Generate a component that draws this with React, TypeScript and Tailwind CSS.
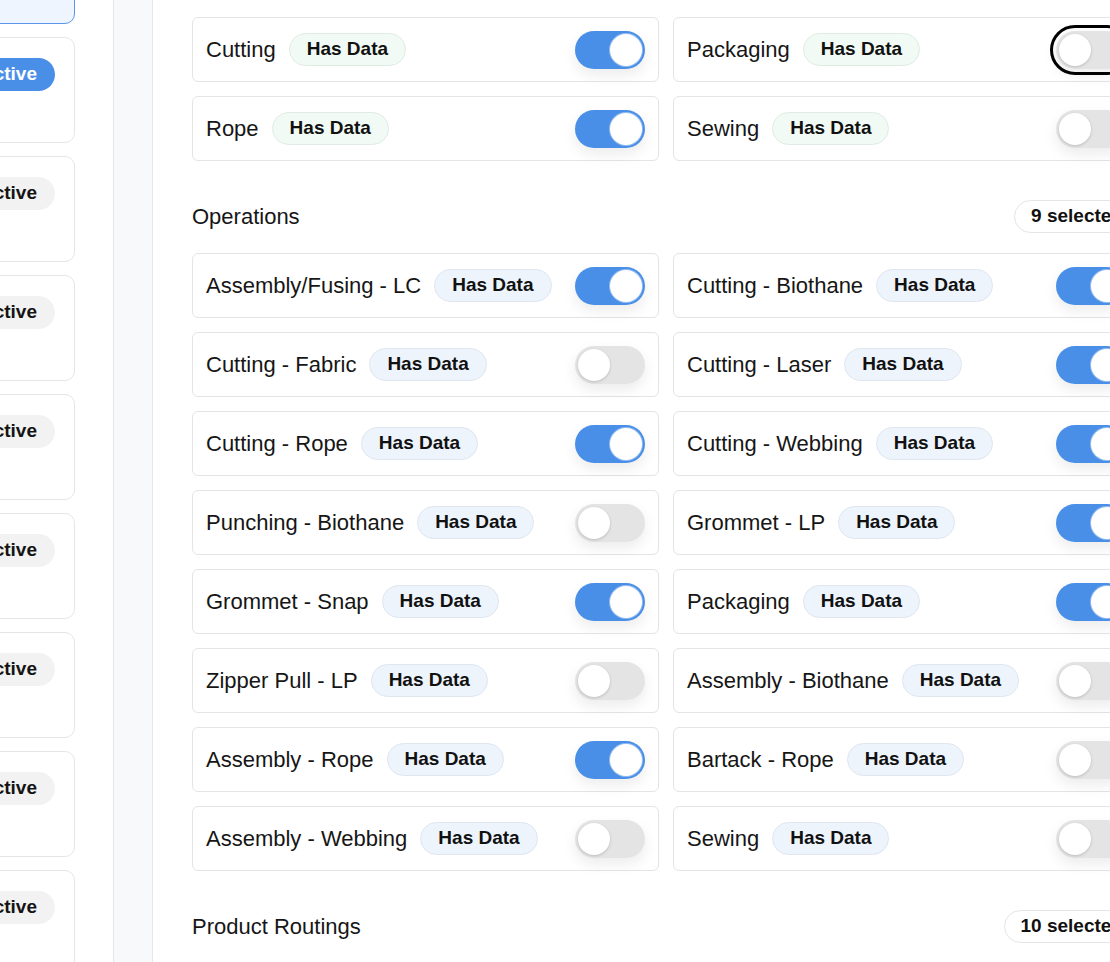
import React from 'react'

type Item = { name: string; on: boolean; focused?: boolean }

const departments: Item[] = [
  { name: 'Cutting', on: true },
  { name: 'Packaging', on: false, focused: true },
  { name: 'Rope', on: true },
  { name: 'Sewing', on: false },
]

const operations: Item[] = [
  { name: 'Assembly/Fusing - LC', on: true },
  { name: 'Cutting - Biothane', on: true },
  { name: 'Cutting - Fabric', on: false },
  { name: 'Cutting - Laser', on: true },
  { name: 'Cutting - Rope', on: true },
  { name: 'Cutting - Webbing', on: true },
  { name: 'Punching - Biothane', on: false },
  { name: 'Grommet - LP', on: true },
  { name: 'Grommet - Snap', on: true },
  { name: 'Packaging', on: true },
  { name: 'Zipper Pull - LP', on: false },
  { name: 'Assembly - Biothane', on: false },
  { name: 'Assembly - Rope', on: true },
  { name: 'Bartack - Rope', on: false },
  { name: 'Assembly - Webbing', on: false },
  { name: 'Sewing', on: false },
]

const sidebarCards = [
  { status: 'Active', selected: true },
  { status: 'Active', selected: false },
  { status: 'Inactive', selected: false },
  { status: 'Inactive', selected: false },
  { status: 'Inactive', selected: false },
  { status: 'Inactive', selected: false },
  { status: 'Inactive', selected: false },
  { status: 'Inactive', selected: false },
  { status: 'Inactive', selected: false },
]

const Toggle = ({ on, focused }: { on: boolean; focused?: boolean }) => (
  <button
    className={
      'relative flex items-center w-[70px] h-[38px] rounded-full shrink-0 px-[3px] shadow-[0_6px_14px_rgba(0,0,0,0.08)] ' +
      (on ? 'bg-[#4a8fe7] justify-end ' : 'bg-[#e4e4e4] justify-start ') +
      (focused ? 'outline-solid outline-[3px] outline-black outline-offset-[3px]' : '')
    }
  >
    <span
      className={
        'block w-[32px] h-[32px] rounded-full bg-white ' +
        (on ? 'shadow-[0_0_0_1px_rgba(255,255,255,0.4)]' : 'shadow-[0_1px_3px_rgba(0,0,0,0.18)]')
      }
    />
  </button>
)

const Row = ({ item, tone }: { item: Item; tone: 'green' | 'blue' }) => (
  <div className="flex items-center justify-between h-[65px] pl-[13px] pr-[13px] bg-white border border-[#e4e4e4] rounded-[6px]">
    <div className="flex items-center gap-[13px]">
      <span className="text-[22px] text-[#161616]">{item.name}</span>
      <span
        className={
          'flex items-center h-[33px] px-[17px] rounded-full border text-[19px] font-bold text-[#111111] ' +
          (tone === 'green' ? 'bg-[#f1faf4] border-[#dfece3]' : 'bg-[#eef4fc] border-[#dfe6f0]')
        }
      >
        Has Data
      </span>
    </div>
    <Toggle on={item.on} focused={item.focused} />
  </div>
)

const SectionHeader = ({ title, count }: { title: string; count: number }) => (
  <div className="flex items-center justify-between mt-[39px] mb-[20px]">
    <span className="text-[22px] text-[#161616]">{title}</span>
    <span className="flex items-center h-[33px] px-4 rounded-full border border-[#e4e4e4] bg-white text-[19px] font-bold text-[#111111]">
      {count} selected
    </span>
  </div>
)

export default function App() {
  return (
    <div className="flex w-[1110px] h-[962px] overflow-hidden bg-white font-['Liberation_Sans',Arial,sans-serif]">
      {/* list panel, scrolled */}
      <div className="w-[113px] shrink-0 overflow-hidden flex flex-col items-end gap-[13px] pr-[38px]">
        {sidebarCards.map((c, i) => (
          <div
            key={i}
            className={
              'w-[260px] h-[106px] shrink-0 rounded-[10px] border flex justify-end pt-[20px] pr-[19px] ' +
              (i === 0 ? '-mt-[82px] ' : '') +
              (c.selected ? 'bg-[#eef5fe] border-[#5b95e8]' : 'bg-white border-[#e6e6e6]')
            }
          >
            <span
              className={
                'flex items-center h-[33px] px-[18px] rounded-full text-[19px] font-bold ' +
                (c.status === 'Active' ? 'bg-[#4a8fe7] text-white' : 'bg-[#f2f2f2] text-[#141414]')
              }
            >
              {c.status}
            </span>
          </div>
        ))}
      </div>

      {/* divider strip */}
      <div className="w-[40px] shrink-0 bg-[#f8f9fa] border-x border-[#e6e7ea]" />

      {/* detail panel */}
      <div className="flex-1 overflow-hidden pl-[39px] pt-[17px]">
        <div className="w-[948px]">
          <div className="grid grid-cols-2 gap-[14px]">
            {departments.map((d) => (
              <Row key={d.name} item={d} tone="green" />
            ))}
          </div>

          <SectionHeader title="Operations" count={operations.filter((o) => o.on).length} />
          <div className="grid grid-cols-2 gap-[14px]">
            {operations.map((o, i) => (
              <Row key={i} item={o} tone="blue" />
            ))}
          </div>

          <SectionHeader title="Product Routings" count={10} />
        </div>
      </div>
    </div>
  )
}
